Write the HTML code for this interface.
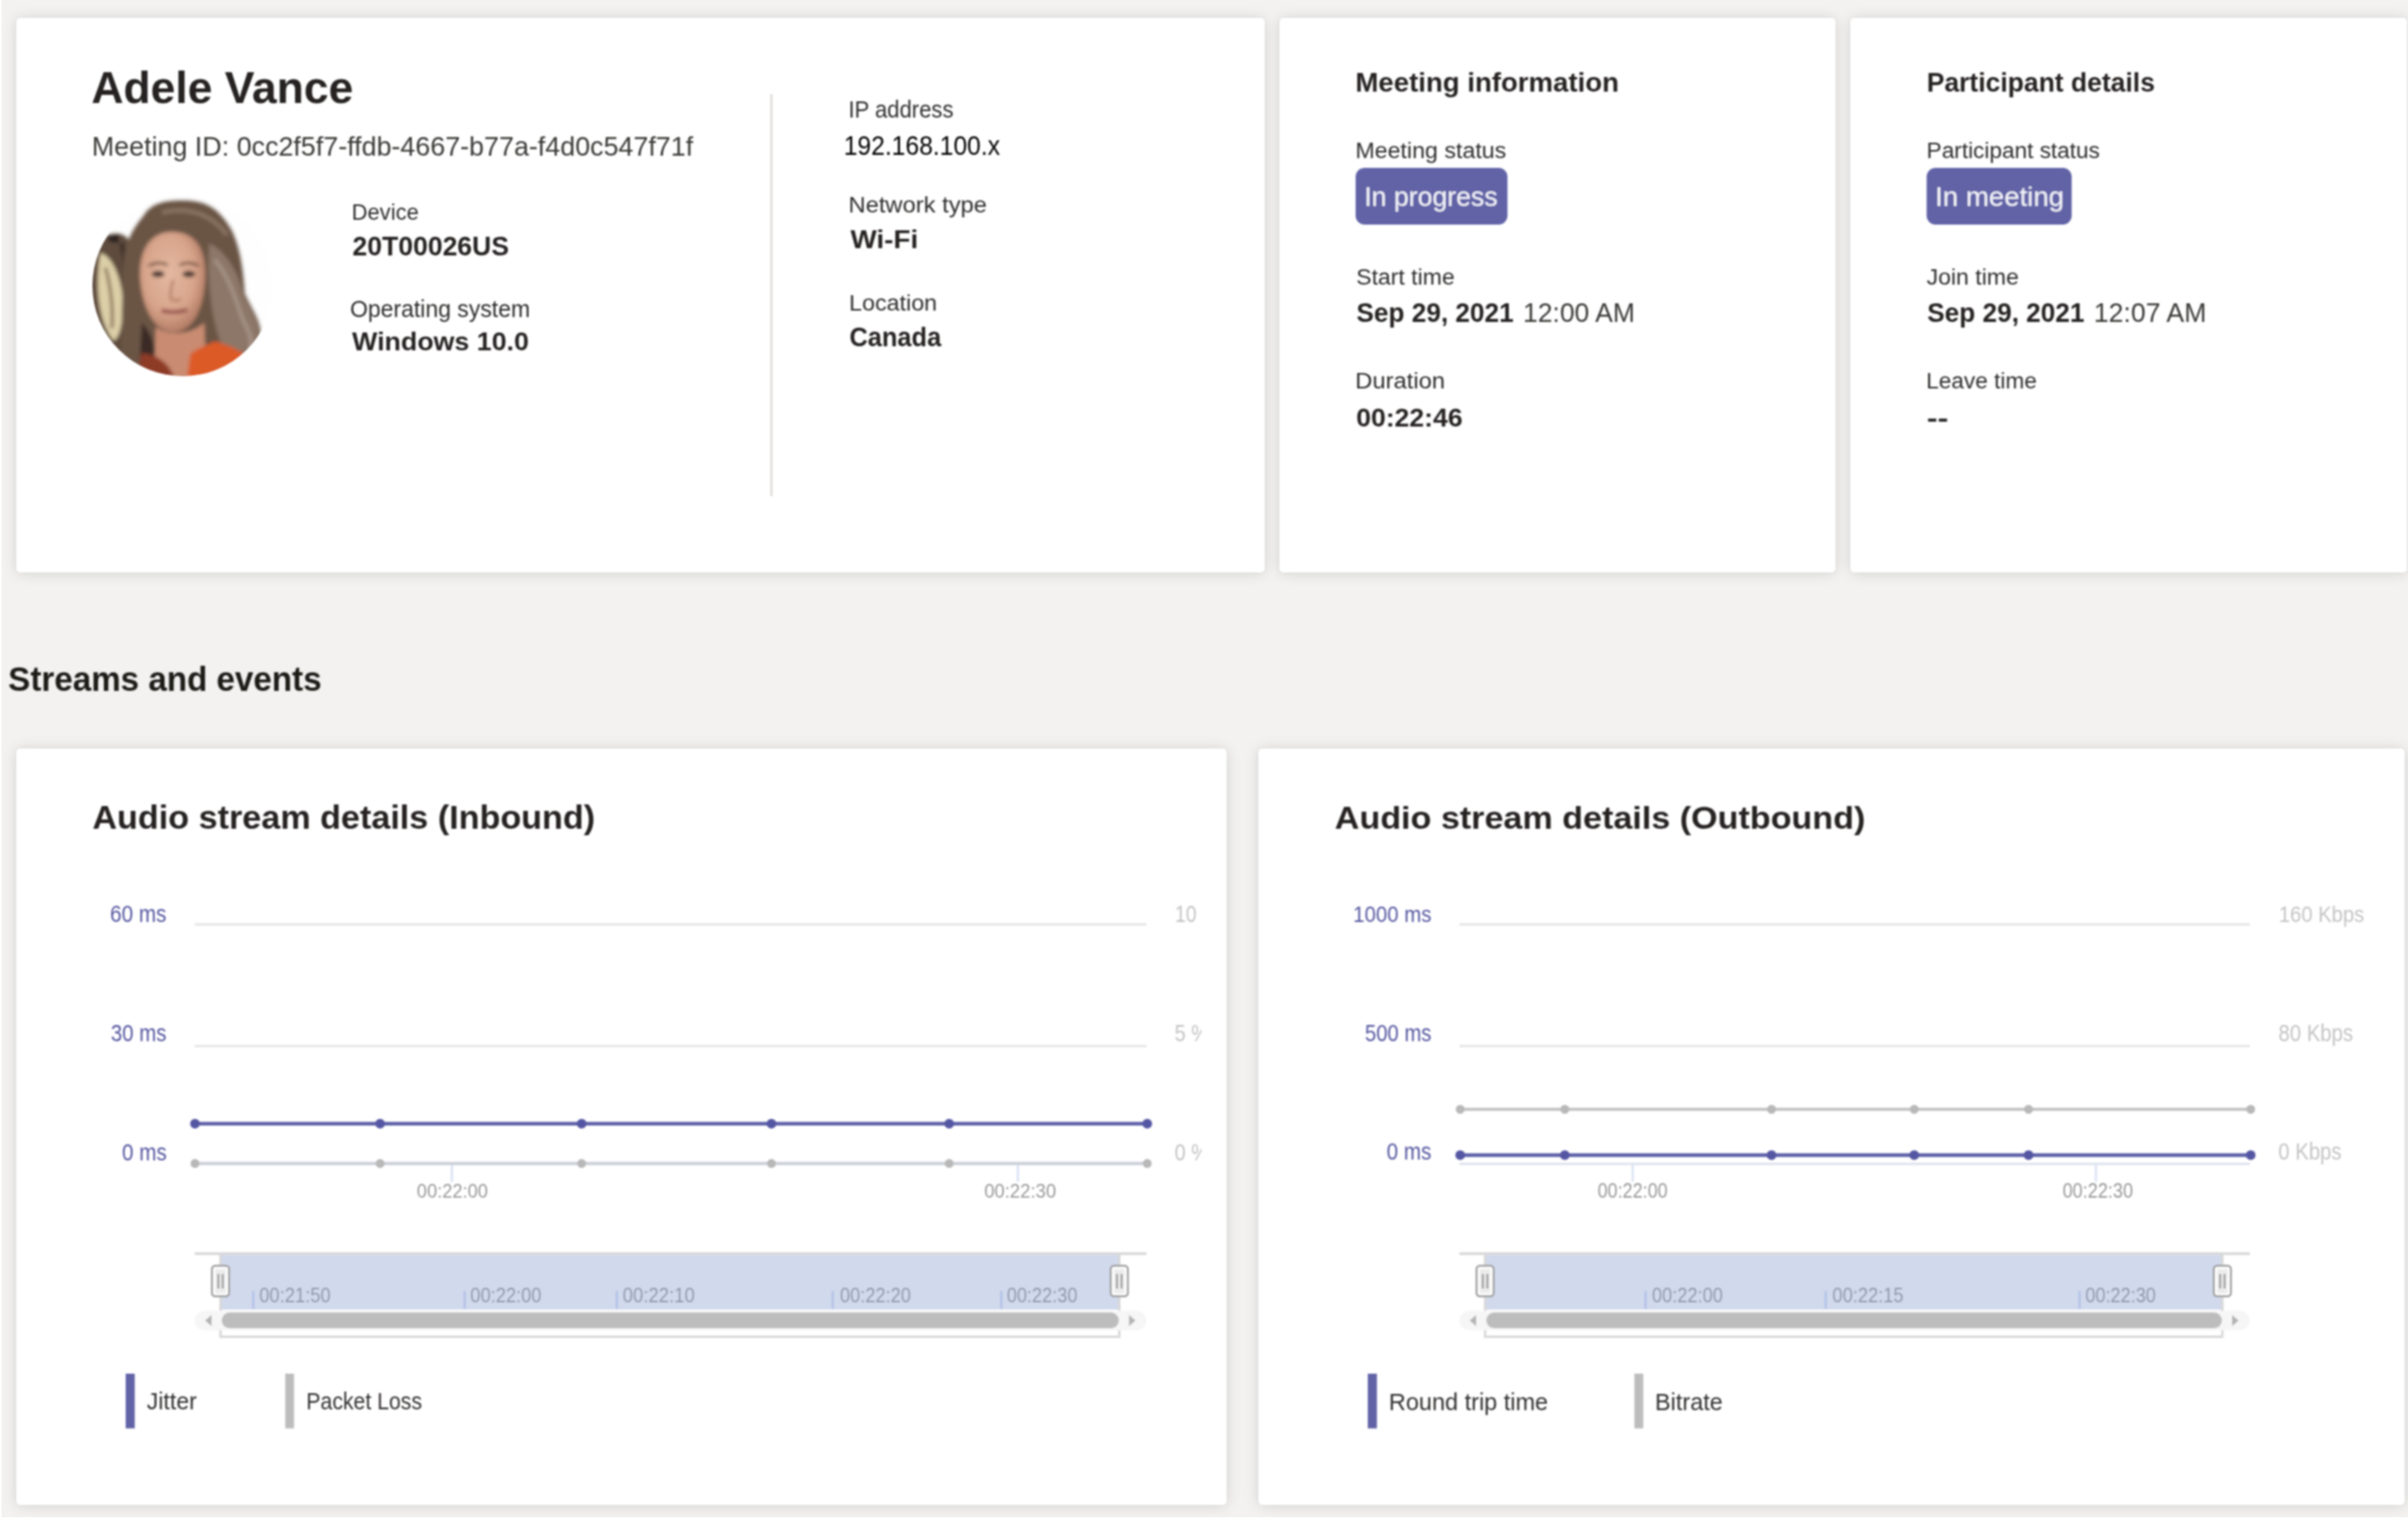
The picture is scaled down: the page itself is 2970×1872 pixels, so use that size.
<!DOCTYPE html>
<html><head><meta charset="utf-8"><style>
html,body{margin:0;padding:0;}
body{width:2970px;height:1872px;background:#f3f2f1;position:relative;overflow:hidden;font-family:"Liberation Sans",sans-serif;}
.c{position:absolute;background:#fff;border-radius:5px;box-shadow:0 0 3px rgba(0,0,0,.09),0 1px 18px rgba(0,0,0,.13);}
#lstrip{position:absolute;left:0;top:0;width:2px;height:1872px;background:#fff;}
#bstrip{position:absolute;left:0;top:1871px;width:2970px;height:1px;background:#fff;}
svg{position:absolute;left:0;top:0;}
text{font-family:"Liberation Sans",sans-serif;}
#wrap{position:absolute;left:0;top:0;width:2970px;height:1872px;}
#cards{position:absolute;left:0;top:0;width:2970px;height:1872px;filter:blur(1px);}
</style></head><body><div id="wrap">
<div id="cards">
<div class="c" style="left:20px;top:22px;width:1540px;height:684px"></div>
<div class="c" style="left:1578px;top:22px;width:686px;height:684px"></div>
<div class="c" style="left:2282px;top:22px;width:687px;height:684px"></div>
<div class="c" style="left:20px;top:923px;width:1493px;height:933px"></div>
<div class="c" style="left:1552px;top:923px;width:1414px;height:933px"></div>
</div>
<div id="lstrip"></div><div id="bstrip"></div>
<svg width="2970" height="1872" viewBox="0 0 2970 1872">
<defs><filter id="soft" filterUnits="userSpaceOnUse" x="0" y="0" width="2970" height="1872"><feGaussianBlur stdDeviation="1"/></filter><clipPath id="clipIn"><rect x="1440" y="1080" width="42" height="380"/></clipPath></defs>
<g filter="url(#soft)">
<line x1="240.0" y1="1140.0" x2="1414.0" y2="1140.0" stroke="#e6e6e6" stroke-width="3.0"/><line x1="240.0" y1="1290.0" x2="1414.0" y2="1290.0" stroke="#e6e6e6" stroke-width="3.0"/><line x1="240.0" y1="1435.3" x2="1414.0" y2="1435.3" stroke="#dfe3ee" stroke-width="3.0"/><line x1="557.3" y1="1436.0" x2="557.3" y2="1457.5" stroke="#dde4f4" stroke-width="3.0"/><line x1="1255.5" y1="1436.0" x2="1255.5" y2="1457.5" stroke="#dde4f4" stroke-width="3.0"/><line x1="240.5" y1="1434.8" x2="1415.0" y2="1434.8" stroke="#ccd0d9" stroke-width="4.0"/><circle cx="240.5" cy="1434.8" r="5.5" fill="#b8b8b8"/><circle cx="468.8" cy="1434.8" r="5.5" fill="#b8b8b8"/><circle cx="717.4" cy="1434.8" r="5.5" fill="#b8b8b8"/><circle cx="951.5" cy="1434.8" r="5.5" fill="#b8b8b8"/><circle cx="1170.7" cy="1434.8" r="5.5" fill="#b8b8b8"/><circle cx="1415.0" cy="1434.8" r="5.5" fill="#b8b8b8"/><line x1="240.5" y1="1385.7" x2="1415.0" y2="1385.7" stroke="#5d60a8" stroke-width="4.5"/><circle cx="240.5" cy="1385.7" r="6.0" fill="#5557a3"/><circle cx="468.8" cy="1385.7" r="6.0" fill="#5557a3"/><circle cx="717.4" cy="1385.7" r="6.0" fill="#5557a3"/><circle cx="951.5" cy="1385.7" r="6.0" fill="#5557a3"/><circle cx="1170.7" cy="1385.7" r="6.0" fill="#5557a3"/><circle cx="1415.0" cy="1385.7" r="6.0" fill="#5557a3"/><line x1="240.0" y1="1546.0" x2="1414.0" y2="1546.0" stroke="#d4d4d4" stroke-width="3.0"/><rect x="272.0" y="1547.5" width="1108.5" height="67.5" rx="0.0" fill="#d1d9ec"/><line x1="272.0" y1="1546.0" x2="272.0" y2="1650.0" stroke="#d8d8d8" stroke-width="3.0"/><line x1="1380.5" y1="1546.0" x2="1380.5" y2="1650.0" stroke="#d8d8d8" stroke-width="3.0"/><line x1="272.0" y1="1648.6" x2="1380.5" y2="1648.6" stroke="#d8d8d8" stroke-width="3.0"/><line x1="312.4" y1="1592.0" x2="312.4" y2="1614.0" stroke="#b3c3e8" stroke-width="3.0"/><line x1="573.0" y1="1592.0" x2="573.0" y2="1614.0" stroke="#b3c3e8" stroke-width="3.0"/><line x1="760.8" y1="1592.0" x2="760.8" y2="1614.0" stroke="#b3c3e8" stroke-width="3.0"/><line x1="1027.0" y1="1592.0" x2="1027.0" y2="1614.0" stroke="#b3c3e8" stroke-width="3.0"/><line x1="1235.0" y1="1592.0" x2="1235.0" y2="1614.0" stroke="#b3c3e8" stroke-width="3.0"/><rect x="240.0" y="1616.5" width="1174.0" height="24.0" rx="12.0" fill="#f6f6f6"/><rect x="273.5" y="1618.6" width="1106.5" height="19.4" rx="9.7" fill="#bdbdbd"/><path d="M253.0 1628.5 l8 -7 v14 z" fill="#b4b4b4"/><path d="M1400.5 1628.5 l-8 -7 v14 z" fill="#b4b4b4"/><rect x="261.5" y="1561.0" width="21.0" height="37.5" rx="4.0" fill="#ffffff" stroke="#9e9e9e" stroke-width="2.5"/><rect x="265.5" y="1565.0" width="13.0" height="30.0" rx="1.0" fill="#ececec"/><rect x="268.0" y="1571.0" width="2.5" height="18.0" rx="0.0" fill="#9c9c9c"/><rect x="273.5" y="1571.0" width="2.5" height="18.0" rx="0.0" fill="#9c9c9c"/><rect x="1370.0" y="1561.0" width="21.0" height="37.5" rx="4.0" fill="#ffffff" stroke="#9e9e9e" stroke-width="2.5"/><rect x="1374.0" y="1565.0" width="13.0" height="30.0" rx="1.0" fill="#ececec"/><rect x="1376.5" y="1571.0" width="2.5" height="18.0" rx="0.0" fill="#9c9c9c"/><rect x="1382.0" y="1571.0" width="2.5" height="18.0" rx="0.0" fill="#9c9c9c"/><line x1="1800.0" y1="1140.0" x2="2775.0" y2="1140.0" stroke="#e6e6e6" stroke-width="3.0"/><line x1="1800.0" y1="1290.0" x2="2775.0" y2="1290.0" stroke="#e6e6e6" stroke-width="3.0"/><line x1="1800.0" y1="1435.3" x2="2775.0" y2="1435.3" stroke="#dfe3ee" stroke-width="3.0"/><line x1="2013.8" y1="1436.0" x2="2013.8" y2="1457.5" stroke="#dde4f4" stroke-width="3.0"/><line x1="2585.0" y1="1436.0" x2="2585.0" y2="1457.5" stroke="#dde4f4" stroke-width="3.0"/><line x1="1801.0" y1="1368.0" x2="2776.0" y2="1368.0" stroke="#c6c6c6" stroke-width="4.0"/><circle cx="1801.0" cy="1368.0" r="5.5" fill="#b8b8b8"/><circle cx="1930.0" cy="1368.0" r="5.5" fill="#b8b8b8"/><circle cx="2185.0" cy="1368.0" r="5.5" fill="#b8b8b8"/><circle cx="2361.0" cy="1368.0" r="5.5" fill="#b8b8b8"/><circle cx="2502.0" cy="1368.0" r="5.5" fill="#b8b8b8"/><circle cx="2776.0" cy="1368.0" r="5.5" fill="#b8b8b8"/><line x1="1801.0" y1="1424.5" x2="2776.0" y2="1424.5" stroke="#5d60a8" stroke-width="4.5"/><circle cx="1801.0" cy="1424.5" r="6.0" fill="#5557a3"/><circle cx="1930.0" cy="1424.5" r="6.0" fill="#5557a3"/><circle cx="2185.0" cy="1424.5" r="6.0" fill="#5557a3"/><circle cx="2361.0" cy="1424.5" r="6.0" fill="#5557a3"/><circle cx="2502.0" cy="1424.5" r="6.0" fill="#5557a3"/><circle cx="2776.0" cy="1424.5" r="6.0" fill="#5557a3"/><line x1="1800.0" y1="1546.0" x2="2775.0" y2="1546.0" stroke="#d4d4d4" stroke-width="3.0"/><rect x="1831.7" y="1547.5" width="909.3" height="67.5" rx="0.0" fill="#d1d9ec"/><line x1="1831.7" y1="1546.0" x2="1831.7" y2="1650.0" stroke="#d8d8d8" stroke-width="3.0"/><line x1="2741.0" y1="1546.0" x2="2741.0" y2="1650.0" stroke="#d8d8d8" stroke-width="3.0"/><line x1="1831.7" y1="1648.6" x2="2741.0" y2="1648.6" stroke="#d8d8d8" stroke-width="3.0"/><line x1="2029.6" y1="1592.0" x2="2029.6" y2="1614.0" stroke="#b3c3e8" stroke-width="3.0"/><line x1="2251.8" y1="1592.0" x2="2251.8" y2="1614.0" stroke="#b3c3e8" stroke-width="3.0"/><line x1="2564.8" y1="1592.0" x2="2564.8" y2="1614.0" stroke="#b3c3e8" stroke-width="3.0"/><rect x="1800.0" y="1616.5" width="975.0" height="24.0" rx="12.0" fill="#f6f6f6"/><rect x="1833.2" y="1618.6" width="907.3" height="19.4" rx="9.7" fill="#bdbdbd"/><path d="M1812.7 1628.5 l8 -7 v14 z" fill="#b4b4b4"/><path d="M2761.0 1628.5 l-8 -7 v14 z" fill="#b4b4b4"/><rect x="1821.2" y="1561.0" width="21.0" height="37.5" rx="4.0" fill="#ffffff" stroke="#9e9e9e" stroke-width="2.5"/><rect x="1825.2" y="1565.0" width="13.0" height="30.0" rx="1.0" fill="#ececec"/><rect x="1827.7" y="1571.0" width="2.5" height="18.0" rx="0.0" fill="#9c9c9c"/><rect x="1833.2" y="1571.0" width="2.5" height="18.0" rx="0.0" fill="#9c9c9c"/><rect x="2730.5" y="1561.0" width="21.0" height="37.5" rx="4.0" fill="#ffffff" stroke="#9e9e9e" stroke-width="2.5"/><rect x="2734.5" y="1565.0" width="13.0" height="30.0" rx="1.0" fill="#ececec"/><rect x="2737.0" y="1571.0" width="2.5" height="18.0" rx="0.0" fill="#9c9c9c"/><rect x="2742.5" y="1571.0" width="2.5" height="18.0" rx="0.0" fill="#9c9c9c"/><rect x="155.0" y="1694.0" width="11.2" height="67.5" rx="0.0" fill="#6264a7"/><rect x="351.8" y="1694.0" width="10.8" height="67.5" rx="0.0" fill="#bdbdbd"/><rect x="1687.0" y="1694.0" width="11.3" height="67.5" rx="0.0" fill="#6264a7"/><rect x="2015.8" y="1694.0" width="11.0" height="67.5" rx="0.0" fill="#bdbdbd"/><rect x="1672.0" y="207.0" width="187.3" height="70.0" rx="11.0" fill="#6264a7"/><rect x="2376.3" y="207.0" width="178.9" height="70.0" rx="11.0" fill="#6264a7"/><line x1="951.5" y1="116.0" x2="951.5" y2="612.0" stroke="#e1dfdd" stroke-width="3.0"/>
<defs><clipPath id="av"><circle cx="225.5" cy="352.5" r="111.5"/></clipPath>
<radialGradient id="face" cx="0.45" cy="0.42" r="0.6"><stop offset="0" stop-color="#e4b9a1"/><stop offset="0.65" stop-color="#d7a48a"/><stop offset="1" stop-color="#b07862"/></radialGradient>
<filter id="avb" x="-20%" y="-20%" width="140%" height="140%"><feGaussianBlur stdDeviation="2"/></filter>
</defs>
<g clip-path="url(#av)">
<rect x="110" y="238" width="232" height="232" fill="#fefefe"/>
<g filter="url(#avb)">
<path d="M131 290 C160 282 165 300 160 330 L155 470 L100 470 L100 290 Z" fill="#5f4b3d"/>
<path d="M124 312 C140 316 152 350 152 380 C150 405 146 418 140 420 C124 400 116 360 124 312 Z" fill="#ddd0a8"/>
<path d="M133 291 L147 289 L146 300 L134 298 Z" fill="#2a2220"/>
<path d="M130 330 C136 350 140 380 138 405" stroke="#8a7258" stroke-width="4" fill="none"/>
<path d="M150 300 C158 330 156 380 165 420" stroke="#3e302a" stroke-width="6" fill="none"/>
<path d="M177 266 C185 252 200 247 225 247 C255 247 270 257 286 284 C296 305 300 330 302 362 C310 380 320 392 322 411 C322 425 315 432 307 433 L300 470 L148 470 C150 430 150 380 152 330 C152 300 165 280 177 266 Z" fill="#6a5445"/>
<path d="M258 300 C280 310 296 340 300 365 C312 385 320 400 320 420 C310 436 290 440 275 430 C262 400 255 350 258 300 Z" fill="#8d7768"/>
<path d="M265 320 C285 345 290 370 300 395 C308 410 312 420 308 430" stroke="#a8968a" stroke-width="4" fill="none"/>
<path d="M200 262 C230 255 260 262 280 290" stroke="#8a7464" stroke-width="5" fill="none"/>
<path d="M173 345 C170 305 188 286 212 286 C240 286 255 305 253 345 C251 382 238 408 215 410 C193 410 176 385 173 345 Z" fill="url(#face)"/>
<path d="M175 398 C186 410 192 425 194 450 L172 450 Z" fill="#3a2c26"/>
<path d="M192 403 C205 414 235 414 252 398 L254 470 L190 470 Z" fill="#c98c72"/>
<path d="M235 436 C248 427 266 421 266 421 C280 425 292 430 300 436 L312 470 L230 470 Z" fill="#dc5a26"/>
<path d="M174 436 C190 436 210 445 216 470 L168 470 Z" fill="#8e3b28"/>
<path d="M183 328 q12 -7 24 -1" stroke="#6a4a3a" stroke-width="3" fill="none"/>
<path d="M221 327 q12 -6 24 1" stroke="#6a4a3a" stroke-width="3" fill="none"/>
<ellipse cx="195" cy="338" rx="8" ry="4" fill="#4a3430"/>
<ellipse cx="233" cy="338" rx="8" ry="4" fill="#4a3430"/>
<path d="M214 345 q-5 14 -3 24 q6 3 12 0" stroke="#b07a64" stroke-width="3" fill="none"/>
<path d="M199 383 q16 4 32 -1" stroke="#9a5550" stroke-width="5" fill="none"/>
</g>
</g>

<text x="112.65" y="127.00" font-size="54.71" font-weight="700" fill="#252423" textLength="323.21" lengthAdjust="spacingAndGlyphs">Adele Vance</text><text x="113.28" y="191.80" font-size="33.00" fill="#3b3a39" textLength="741.67" lengthAdjust="spacingAndGlyphs">Meeting ID: 0cc2f5f7-ffdb-4667-b77a-f4d0c547f71f</text><text x="433.78" y="271.20" font-size="28.00" fill="#2f2e2d" textLength="82.72" lengthAdjust="spacingAndGlyphs">Device</text><text x="434.87" y="315.00" font-size="33.29" font-weight="700" fill="#252423" textLength="192.91" lengthAdjust="spacingAndGlyphs">20T00026US</text><text x="431.66" y="391.00" font-size="29.14" fill="#2f2e2d" textLength="222.21" lengthAdjust="spacingAndGlyphs">Operating system</text><text x="434.27" y="432.00" font-size="31.43" font-weight="700" fill="#252423" textLength="218.08" lengthAdjust="spacingAndGlyphs">Windows 10.0</text><text x="1046.50" y="145.00" font-size="28.57" fill="#2f2e2d" textLength="129.48" lengthAdjust="spacingAndGlyphs">IP address</text><text x="1040.69" y="191.00" font-size="32.86" fill="#000000" textLength="192.64" lengthAdjust="spacingAndGlyphs">192.168.100.x</text><text x="1046.60" y="262.30" font-size="27.86" fill="#2f2e2d" textLength="170.70" lengthAdjust="spacingAndGlyphs">Network type</text><text x="1048.97" y="305.80" font-size="31.14" font-weight="700" fill="#252423" textLength="83.45" lengthAdjust="spacingAndGlyphs">Wi-Fi</text><text x="1047.24" y="382.50" font-size="28.29" fill="#2f2e2d" textLength="108.62" lengthAdjust="spacingAndGlyphs">Location</text><text x="1047.72" y="426.60" font-size="33.71" font-weight="700" fill="#252423" textLength="113.09" lengthAdjust="spacingAndGlyphs">Canada</text><text x="1671.72" y="112.90" font-size="32.71" font-weight="700" fill="#252423" textLength="325.09" lengthAdjust="spacingAndGlyphs">Meeting information</text><text x="1671.65" y="194.60" font-size="28.43" fill="#2f2e2d" textLength="186.18" lengthAdjust="spacingAndGlyphs">Meeting status</text><text x="1682.66" y="253.60" font-size="33.71" fill="#f4f4fa" textLength="164.52" lengthAdjust="spacingAndGlyphs">In progress</text><text x="1672.71" y="350.70" font-size="28.43" fill="#2f2e2d" textLength="121.55" lengthAdjust="spacingAndGlyphs">Start time</text><text x="1673.07" y="397.20" font-size="33.14" font-weight="700" fill="#252423" textLength="193.83" lengthAdjust="spacingAndGlyphs">Sep 29, 2021</text><text x="1878.55" y="397.20" font-size="33.14" fill="#3b3a39" textLength="137.90" lengthAdjust="spacingAndGlyphs">12:00 AM</text><text x="1671.60" y="479.40" font-size="28.43" fill="#2f2e2d" textLength="110.70" lengthAdjust="spacingAndGlyphs">Duration</text><text x="1672.70" y="526.00" font-size="32.14" font-weight="700" fill="#252423" textLength="131.38" lengthAdjust="spacingAndGlyphs">00:22:46</text><text x="2376.41" y="112.90" font-size="32.71" font-weight="700" fill="#252423" textLength="281.43" lengthAdjust="spacingAndGlyphs">Participant details</text><text x="2376.31" y="194.60" font-size="28.43" fill="#2f2e2d" textLength="213.69" lengthAdjust="spacingAndGlyphs">Participant status</text><text x="2386.86" y="253.60" font-size="33.71" fill="#f4f4fa" textLength="158.93" lengthAdjust="spacingAndGlyphs">In meeting</text><text x="2376.16" y="350.70" font-size="28.43" fill="#2f2e2d" textLength="113.81" lengthAdjust="spacingAndGlyphs">Join time</text><text x="2377.07" y="397.20" font-size="33.14" font-weight="700" fill="#252423" textLength="193.83" lengthAdjust="spacingAndGlyphs">Sep 29, 2021</text><text x="2582.53" y="397.20" font-size="33.14" fill="#3b3a39" textLength="138.94" lengthAdjust="spacingAndGlyphs">12:07 AM</text><text x="2375.71" y="479.40" font-size="28.43" fill="#2f2e2d" textLength="136.53" lengthAdjust="spacingAndGlyphs">Leave time</text><text x="2376.44" y="526.00" font-size="32.14" font-weight="700" fill="#252423" textLength="26.67" lengthAdjust="spacingAndGlyphs">--</text><text x="10.12" y="852.00" font-size="41.86" font-weight="700" fill="#1b1a19" textLength="386.56" lengthAdjust="spacingAndGlyphs">Streams and events</text><text x="113.95" y="1022.00" font-size="40.00" font-weight="700" fill="#252423" textLength="620.15" lengthAdjust="spacingAndGlyphs">Audio stream details (Inbound)</text><text x="1646.35" y="1022.00" font-size="39.00" font-weight="700" fill="#252423" textLength="654.34" lengthAdjust="spacingAndGlyphs">Audio stream details (Outbound)</text>
<text x="135.70" y="1136.90" font-size="30.14" fill="#5557a0" textLength="69.52" lengthAdjust="spacingAndGlyphs">60 ms</text><text x="136.84" y="1283.80" font-size="29.14" fill="#5557a0" textLength="68.36" lengthAdjust="spacingAndGlyphs">30 ms</text><text x="150.61" y="1430.60" font-size="29.71" fill="#5557a0" textLength="55.01" lengthAdjust="spacingAndGlyphs">0 ms</text><text x="1449.17" y="1136.80" font-size="28.86" fill="#c4c4c4" textLength="54.68" lengthAdjust="spacingAndGlyphs" clip-path="url(#clipIn)">10 %</text><text x="1448.82" y="1283.80" font-size="28.86" fill="#c4c4c4" textLength="42.15" lengthAdjust="spacingAndGlyphs" clip-path="url(#clipIn)">5 %</text><text x="1448.85" y="1430.60" font-size="29.71" fill="#c4c4c4" textLength="42.13" lengthAdjust="spacingAndGlyphs" clip-path="url(#clipIn)">0 %</text><text x="514.12" y="1477.10" font-size="24.57" fill="#999999" textLength="87.76" lengthAdjust="spacingAndGlyphs">00:22:00</text><text x="1213.91" y="1477.10" font-size="24.57" fill="#999999" textLength="88.68" lengthAdjust="spacingAndGlyphs">00:22:30</text><text x="319.72" y="1606.20" font-size="25.57" fill="#8a94ab" textLength="88.17" lengthAdjust="spacingAndGlyphs">00:21:50</text><text x="580.12" y="1606.20" font-size="25.57" fill="#8a94ab" textLength="87.76" lengthAdjust="spacingAndGlyphs">00:22:00</text><text x="768.11" y="1606.20" font-size="25.57" fill="#8a94ab" textLength="88.78" lengthAdjust="spacingAndGlyphs">00:22:10</text><text x="1036.12" y="1606.20" font-size="25.57" fill="#8a94ab" textLength="87.46" lengthAdjust="spacingAndGlyphs">00:22:20</text><text x="1241.73" y="1606.20" font-size="25.57" fill="#8a94ab" textLength="87.15" lengthAdjust="spacingAndGlyphs">00:22:30</text><text x="181.06" y="1738.00" font-size="28.57" fill="#323130" textLength="61.62" lengthAdjust="spacingAndGlyphs">Jitter</text><text x="377.85" y="1738.00" font-size="28.57" fill="#323130" textLength="142.70" lengthAdjust="spacingAndGlyphs">Packet Loss</text><text x="1669.09" y="1137.00" font-size="27.86" fill="#5557a0" textLength="96.42" lengthAdjust="spacingAndGlyphs">1000 ms</text><text x="1683.50" y="1284.00" font-size="28.57" fill="#5557a0" textLength="82.00" lengthAdjust="spacingAndGlyphs">500 ms</text><text x="1710.30" y="1430.30" font-size="28.57" fill="#5557a0" textLength="55.22" lengthAdjust="spacingAndGlyphs">0 ms</text><text x="2810.70" y="1137.00" font-size="27.86" fill="#c4c4c4" textLength="105.40" lengthAdjust="spacingAndGlyphs">160 Kbps</text><text x="2810.31" y="1284.00" font-size="28.57" fill="#c4c4c4" textLength="92.00" lengthAdjust="spacingAndGlyphs">80 Kbps</text><text x="2810.02" y="1430.30" font-size="28.57" fill="#c4c4c4" textLength="78.09" lengthAdjust="spacingAndGlyphs">0 Kbps</text><text x="1970.53" y="1477.00" font-size="24.86" fill="#999999" textLength="86.33" lengthAdjust="spacingAndGlyphs">00:22:00</text><text x="2543.93" y="1477.00" font-size="24.86" fill="#999999" textLength="86.95" lengthAdjust="spacingAndGlyphs">00:22:30</text><text x="2037.62" y="1606.20" font-size="25.57" fill="#8a94ab" textLength="87.25" lengthAdjust="spacingAndGlyphs">00:22:00</text><text x="2260.12" y="1606.20" font-size="25.57" fill="#8a94ab" textLength="87.73" lengthAdjust="spacingAndGlyphs">00:22:15</text><text x="2572.03" y="1606.20" font-size="25.57" fill="#8a94ab" textLength="87.05" lengthAdjust="spacingAndGlyphs">00:22:30</text><text x="1713.02" y="1738.80" font-size="29.86" fill="#323130" textLength="196.46" lengthAdjust="spacingAndGlyphs">Round trip time</text><text x="2041.33" y="1738.80" font-size="29.86" fill="#323130" textLength="83.45" lengthAdjust="spacingAndGlyphs">Bitrate</text>
</g>
</svg>
</div></body></html>
